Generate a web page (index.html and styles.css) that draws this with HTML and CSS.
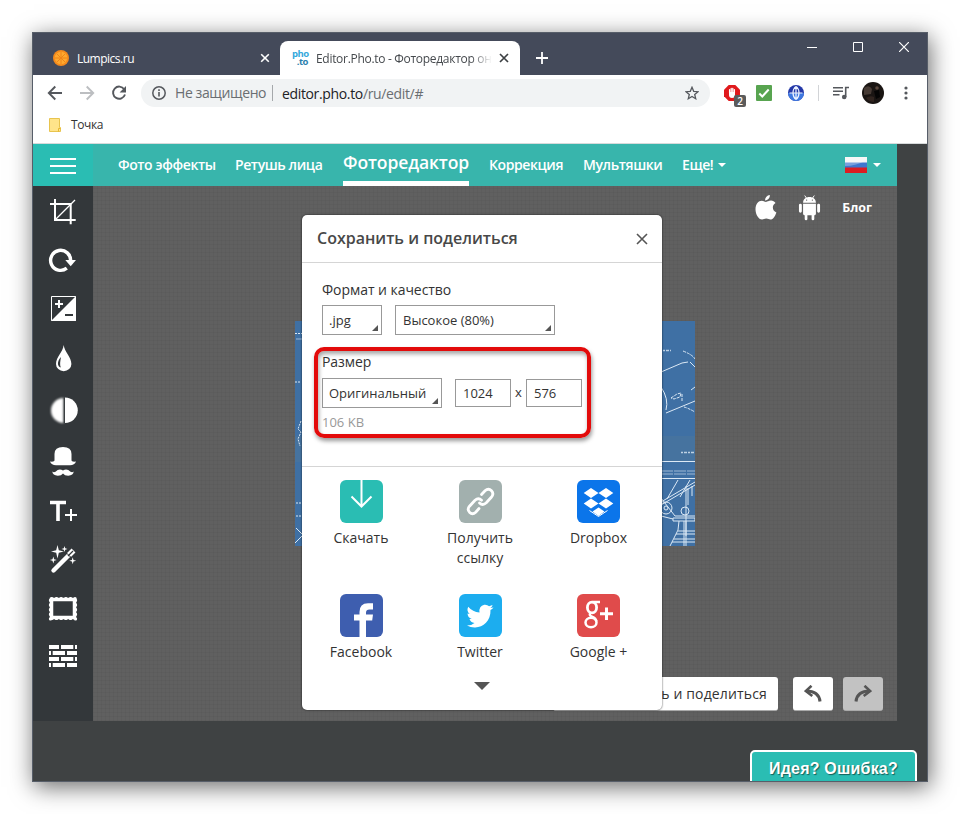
FILE: index.html
```html
<!DOCTYPE html>
<html lang="ru">
<head>
  <meta charset="UTF-8" />
  <meta name="viewport" content="width=device-width, initial-scale=1.0" />
  <title>Editor.Pho.to - Фоторедактор онлайн</title>
  <link rel="stylesheet" href="styles.css">
</head>
<body>
  <div class="window">
    <!-- вкладки -->
    <div class="titlebar">
      <div class="tab">
        <svg class="tab-icon" width="16" height="16" viewBox="0 0 16 16">
          <circle cx="8" cy="8" r="8" fill="#f58a1c"/><circle cx="8" cy="8" r="6.2" fill="#ffa92e"/>
          <path d="M8 2v12M2 8h12M3.8 3.8l8.4 8.4M12.2 3.8l-8.4 8.4" stroke="#f08418" stroke-width="1"/>
        </svg>
        <span class="tab-name">Lumpics.ru</span>
        <svg class="tab-close" width="10" height="10" viewBox="0 0 10 10"><path d="M1.2 1.2l7.6 7.6M8.8 1.2L1.2 8.8" stroke="#fff" stroke-width="1.6"/></svg>
      </div>
      <div class="tab active">
        <span class="photo-icon"><b>pho</b><b class="to">.to</b></span>
        <span class="tab-name fade">Editor.Pho.to - Фоторедактор он</span>
        <svg class="tab-close" width="10" height="10" viewBox="0 0 10 10"><path d="M1 1l8 8M9 1L1 9" stroke="#3c4043" stroke-width="1.7"/></svg>
      </div>
      <svg class="new-tab" width="12" height="12" viewBox="0 0 12 12"><path d="M6 0v12M0 6h12" stroke="#fff" stroke-width="1.8"/></svg>
      <div class="win-buttons">
        <svg width="10" height="10" viewBox="0 0 10 10"><path d="M0 5.5h10" stroke="#fff"/></svg>
        <svg width="10" height="10" viewBox="0 0 10 10"><path d="M.5 .5h9v9h-9z" fill="none" stroke="#fff"/></svg>
        <svg width="10" height="10" viewBox="0 0 10 10"><path d="M0 0l10 10M10 0L0 10" stroke="#fff" stroke-width="1.2"/></svg>
      </div>
    </div>

    <!-- адресная строка -->
    <div class="toolbar">
      <svg class="nav-btn" width="16" height="16" viewBox="0 0 16 16"><path d="M15 8H2M8.3 1.5L1.8 8l6.5 6.5" fill="none" stroke="#55585d" stroke-width="1.9"/></svg>
      <svg class="nav-btn" width="16" height="16" viewBox="0 0 16 16"><path d="M1 8h13M7.7 1.5L14.2 8l-6.5 6.5" fill="none" stroke="#bcbec1" stroke-width="1.9"/></svg>
      <svg class="nav-btn" width="16" height="16" viewBox="0 0 16 16"><path d="M13.2 4.2A6.1 6.1 0 1 0 14 9.5" fill="none" stroke="#55585d" stroke-width="1.9"/><path d="M15 1v6.4H8.6z" fill="#55585d"/></svg>
      <div class="omnibox">
        <svg width="14" height="14" viewBox="0 0 14 14"><circle cx="7" cy="7" r="6.2" fill="none" stroke="#55585d" stroke-width="1.5"/><path d="M7 6v4.5M7 3.2v1.7" stroke="#55585d" stroke-width="1.6"/></svg>
        <span class="insecure">Не защищено</span>
        <span class="url"><b>editor.pho.to</b>/ru/edit/#</span>
        <svg class="star" width="14" height="14" viewBox="0 0 14 14"><path d="M7 1.3l1.7 4 4.3.4-3.3 2.8 1 4.2L7 10.5l-3.7 2.2 1-4.2L1 5.7l4.3-.4z" fill="none" stroke="#55585d" stroke-width="1.3"/></svg>
      </div>
      <div class="extensions">
        <div class="blocker">
          <svg width="16" height="16" viewBox="0 0 16 16"><path d="M4.7 0h6.6L16 4.7v6.6L11.3 16H4.7L0 11.3V4.7z" fill="#e0191c"/><path d="M5.600 8V4.700M7.200 7V3.500M8.800 7V3.500M10.400 8V4.700" stroke="#fff" stroke-width="1.300" stroke-linecap="round"/><path d="M5 7h6v3a3 3 0 0 1-6 0z" fill="#fff"/></svg>
          <span class="count">2</span>
        </div>
        <svg width="16" height="16" viewBox="0 0 16 16"><rect width="16" height="16" rx="1" fill="#58a450"/><path d="M3.3 8.5l3 3 6.4-7" fill="none" stroke="#fff" stroke-width="2"/></svg>
        <svg width="16" height="16" viewBox="0 0 16 16"><circle cx="8" cy="8" r="8" fill="#2438a8"/><path d="M0 8a8 8 0 0 0 16 0z" fill="#3f78e0"/><path d="M8 1.500v13M1.500 8h13M8 1.500C4 4.500 4 11.500 8 14.500M8 1.500c4 3 4 10 0 13" fill="none" stroke="#eef4ff" stroke-width="1.2"/></svg>
        <i class="split"></i>
        <svg class="playlist" width="16" height="14" viewBox="0 0 16 14"><path d="M0 1.700h10M0 5.200h10M0 8.700h6.500" stroke="#55585d" stroke-width="1.5"/><path d="M12.700 11V1.500H16" fill="none" stroke="#55585d" stroke-width="1.600"/><circle cx="11.200" cy="11" r="2.300" fill="#55585d"/></svg>
        <svg class="avatar" width="22" height="22" viewBox="0 0 22 22"><circle cx="11" cy="11" r="11" fill="#1a1513"/><path d="M2 6q5-4 8 1l-1 5-7 1z" fill="#463a34"/><path d="M12 9l5-1 1 7-4 2z" fill="#050505"/><path d="M4 16q4-3 8-1v5q-5 0-8-4z" fill="#30241f"/><circle cx="15" cy="6" r="1.800" fill="#5a473d"/></svg>
        <svg class="dots" width="4" height="14" viewBox="0 0 4 14"><g fill="#55585d"><circle cx="2" cy="2" r="1.600"/><circle cx="2" cy="7" r="1.600"/><circle cx="2" cy="12" r="1.600"/></g></svg>
      </div>
    </div>

    <div class="bookmarks">
      <svg width="13" height="14" viewBox="0 0 13 14"><path d="M.5.5h10v9h1v4H.5z" fill="#ffe48a" stroke="#e8c44e"/><path d="M9.500 13.500v-3h2" fill="none" stroke="#e8b830"/></svg>
      <span>Точка</span>
    </div>

    <!-- страница редактора -->
    <div class="page">
      <header class="site-header">
        <div class="burger"><i></i><i></i><i></i></div>
        <nav class="menu">
          <a class="w-effects">Фото эффекты</a>
          <a class="w-retouch">Ретушь лица</a>
          <a class="current">Фоторедактор</a>
          <a class="w-fix">Коррекция</a>
          <a class="w-toon">Мультяшки</a>
          <a class="w-more">Еще!<i class="caret"></i></a>
        </nav>
        <div class="lang">
          <svg width="22" height="16" viewBox="0 0 22 16"><path fill="#f4f4f4" d="M0 0h22v6H0z"/><path fill="#3f77cf" d="M0 5.500h22V11H0z"/><path fill="#dc1d22" d="M0 10.500h22V16H0z"/><path d="M0 9Q11 9 22 3V0H0z" fill="#fff" opacity=".3"/></svg>
          <i class="caret"></i>
        </div>
      </header>

      <div class="editor">
        <aside class="tools">
          <svg width="60" height="50"><path d="M22 13v21h20.700M17 18h20.700v20.300" fill="none" stroke="#fff" stroke-width="2"/><path d="M22.500 33.500L42 14" stroke="#fff" stroke-width="1.200"/></svg>
          <svg width="60" height="50"><path d="M37.600 25A10 10 0 1 0 33.800 32.200" fill="none" stroke="#fff" stroke-width="3.400"/><path d="M32.300 24H43l-5.300 6.200z" fill="#fff"/></svg>
          <svg width="60" height="50"><path d="M18.500 10.500h24v24h-24z" fill="none" stroke="#fff"/><path d="M43 10v25H18z" fill="#fff"/><path d="M22 18h8M26 14v8" stroke="#fff" stroke-width="2"/><path d="M32 29h8" stroke="#33373a" stroke-width="2"/></svg>
          <svg width="60" height="50"><path d="M30.700 9C30 16 23 21 23 28a7.700 7.200 0 0 0 15.400 0C38.400 21 31.500 16 30.700 9z" fill="#fff"/><path d="M28 21c-4.500 5-3.500 9.500-.2 10.500-1.300-3-.5-6 .2-10.500z" fill="#33373a"/></svg>
          <svg width="60" height="50"><path class="soft" d="M30.500 12a12.500 12.500 0 0 0 0 25z" fill="#fff"/><path d="M32 11.500a12.600 12.600 0 0 1 0 25.500z" fill="#fff"/><path d="M31.300 12v25" stroke="#33373a"/></svg>
          <svg width="60" height="50"><path d="M21.500 24.500V18q0-7 8.500-7t8.500 7v6.500q0 1.500 4.500 1-1.500 3.800-6 3.800H23q-4.500 0-6-3.800 4.500.5 4.500-1z" fill="#fff"/><path d="M30 34.500q-4-2.500-7.500 1.300-1.700 1-3.200-.2.300 3.900 5.500 4.200 3.700 0 5.200-2.200 1.500 2.200 5.200 2.200 5.200-.3 5.500-4.200-1.500 1.200-3.200.2-3.500-3.800-7.500-1.300z" fill="#fff"/></svg>
          <svg width="60" height="50"><path d="M17 16.500h16M25 16v19" fill="none" stroke="#fff" stroke-width="3.600"/><path d="M32 29h12M38 23v12" stroke="#fff" stroke-width="2"/></svg>
          <svg width="60" height="50"><path d="M20.500 34.500l15-15" stroke="#fff" stroke-width="4.400" stroke-linecap="round"/><path d="M36 19l4.500-4.500" stroke="#fff" stroke-width="5.500"/><path d="M35 20l5-5" stroke="#33373a" stroke-width="1.200"/><path d="M34 17.500l3.500 3.500" stroke="#33373a"/><path d="M24.500 9l1.300 5.200 5.200 1.300-5.200 1.300-1.300 5.700-1.300-5.700L18 15.500l5.200-1.300zM31.500 10l.7 2.300 2.300.7-2.300.7-.7 2.300-.7-2.300-2.300-.7 2.300-.7zM20.300 20.500l.8 2.700 2.700.8-2.700.8-.8 2.700-.8-2.700-2.700-.8 2.700-.8zM39.700 21.200l.8 2.700 2.700.8-2.700.8-.8 2.700-.8-2.700-2.700-.8 2.700-.8z" fill="#fff"/></svg>
          <svg width="60" height="50"><path d="M18.500 13.500h23v18h-23z" fill="none" stroke="#fff" stroke-width="3.500"/><path d="M18.500 12.500h23.500M18.500 32.500h23.500M17.500 14v19M42.500 14v19" stroke="#fff" stroke-width="3.200" stroke-linecap="round" stroke-dasharray="0.500 4.200"/></svg>
          <svg width="60" height="50"><path d="M16 11h10m2 0h12.300m1.700 0h2M16 17h2m1.700 0H32m2 0h10M16 23h10m2 0h12.300m1.700 0h2M16 29h2m1.700 0H32m2 0h10" stroke="#fff" stroke-width="4"/></svg>
        </aside>

        <main class="canvas">
          <div class="apps">
            <svg width="22" height="26" viewBox="0 0 22 26"><path d="M14.800 0c.3 3-2.200 5.500-4.700 5.400C9.800 2.700 12 .400 14.800 0zM11 6.900c1.300 0 2.700-1.300 5-1.300 1.800 0 3.500.9 4.500 2.400-4 2.300-3.300 7.900.9 9.400-1.300 3.700-3.500 7.200-5.900 7.200-1.600 0-2.200-1-4.200-1s-2.700 1-4.200 1C3.500 24.600.5 19.200.5 14.300c0-5.300 3-8.600 6.300-8.600 1.800 0 3 1.200 4.200 1.200z" fill="#fff"/></svg>
            <svg width="23" height="27" viewBox="0 0 24 27"><path d="M5.300 8.500c0-3.800 3-6 6.700-6s6.700 2.200 6.700 6zM5.300 9.500h13.400v10.600q0 1.400-1.400 1.400H17v4q0 1.300-1.400 1.300T14.200 25.500v-4H9.800v4q0 1.300-1.400 1.300T7 25.500v-4h-.3q-1.400 0-1.400-1.400z" fill="#fff"/><path d="M2.500 11v6.500M21.500 11v6.500" stroke="#fff" stroke-width="3" stroke-linecap="round"/><path d="M7 1l2 3M17 1l-2 3" stroke="#fff"/><circle cx="9" cy="5.800" r=".7" fill="#5a5a5a"/><circle cx="15" cy="5.800" r=".7" fill="#5a5a5a"/></svg>
            <span>Блог</span>
          </div>

          <svg class="photo" width="400" height="225" viewBox="0 0 400 225">
            <rect width="400" height="225" fill="#3f70a4"/>
            <path fill="#49749e" d="M0 115h400v26H0z" opacity=".8"/>
            <g fill="none" stroke="#dce9f5" stroke-width="1">
              <path d="M1 18h6" opacity=".6"/>
              <path d="M0 12.500h7M0 61h5M1 182h5M1 195h6" stroke-dasharray="2 1"/>
              <path d="M366 140.500h34M366 157.500h34M0 222l7-7M1 207l6 6"/>
              <path d="M6 100l-3 8 3 3-3 7 2 7" stroke-dasharray="2 1"/>
              <path d="M366 51l21-9 6-1M366 66q8 12 5 23M371 92l29-12M395 41l5 5M396 69l4-3"/>
              <path d="M376 77l6-4 4-1-1 4-6 2zM388 30q10 4 12 8M387 73v7M389 86q4 1 11 5" stroke-dasharray="3 1"/>
              <path d="M366 150h34M366 153h34" opacity=".6" stroke-dasharray="12 1"/>
              <path d="M366 181l34-20M366 184l34-20M372 178l11-19M385 176l10-17M391 165v50M393 167v17M397 165v10"/>
              <circle cx="390" cy="190" r="4"/><circle cx="371" cy="187" r="6"/><circle cx="371" cy="187" r="2"/>
              <path d="M366 177l14 18h20M378 197h22v3h-22zM384 200l-1 9-8 16M391 200v25M389 200v25M383 210h17M381 213h19M379 218h21M377 221h23M366 195l12 3"/>
            </g>
            <path d="M368 29.500h8M386 131.500h13" stroke="#dce9f5" stroke-width="1.500" stroke-dasharray="2 1 3 1" opacity=".8"/>
          </svg>

          <div class="actions">
            <button class="save">Сохранить и поделиться</button>
            <button class="undo"><svg width="18" height="18" viewBox="0 0 18 18"><path d="M7.500.800L1.800 6l6.500 5" fill="none" stroke="#555" stroke-width="2.600"/><path d="M2 6q13 0 14 10.500" fill="none" stroke="#555" stroke-width="3"/></svg></button>
            <button class="undo off"><svg width="18" height="18" viewBox="0 0 18 18"><path d="M10.500.800L16.200 6l-6.500 5" fill="none" stroke="#555" stroke-width="2.600"/><path d="M16 6Q3 6 2 16.500" fill="none" stroke="#555" stroke-width="3"/></svg></button>
          </div>
        </main>
      </div>

      <a class="feedback">Идея? Ошибка?</a>
    </div>

    <!-- диалог сохранения -->
    <div class="modal">
      <div class="modal-head">
        <h2>Сохранить и поделиться</h2>
        <svg width="12" height="12" viewBox="0 0 12 12"><path d="M1 1l10 10M11 1L1 11" stroke="#555" stroke-width="1.600"/></svg>
      </div>
      <div class="modal-form">
        <div class="label">Формат и качество</div>
        <div class="row">
          <div class="select format">.jpg</div>
          <div class="select quality">Высокое (80%)</div>
        </div>
        <div class="label size-label">Размер</div>
        <div class="row">
          <div class="select size">Оригинальный</div>
          <div class="field">1024</div>
          <span class="times">x</span>
          <div class="field">576</div>
        </div>
        <div class="weight">106 KB</div>
        <div class="highlight"></div>
      </div>
      <div class="share">
        <div class="share-item">
          <svg width="43" height="43" viewBox="0 0 43 43"><rect width="43" height="43" rx="6" fill="#2abdb3"/><path d="M21.500 0v26M11.500 16.500l10 10 10-10" fill="none" stroke="#fff" stroke-width="2"/></svg>
          <span>Скачать</span>
        </div>
        <div class="share-item">
          <svg width="43" height="43" viewBox="0 0 43 43"><rect width="43" height="43" rx="6" fill="#a2b0ae"/><g fill="none" stroke="#fff" stroke-width="2.800" stroke-linecap="round"><path d="M22.500 14.500l3.500-3.700q3.500-3.200 6.500 0 2.800 3-.2 6.500l-5 5.500q-3.500 3.200-6.800.2"/><path d="M20 28.500l-3.300 3.700q-3.200 3-6 .3-3-3-.2-6.300l5.500-6q3.500-3 6.500 0"/></g></svg>
          <span>Получить<br>ссылку</span>
        </div>
        <div class="share-item">
          <svg width="43" height="43" viewBox="0 0 43 43"><rect width="43" height="43" rx="6" fill="#0b75ea"/><path d="M14 8l7.500 5-7.500 5-7.300-5zM29 8l7.300 5-7.300 5-7.500-5zM14 18.500l7.500 5-7.500 5-7.300-5zM29 18.500l7.300 5-7.300 5-7.500-5zM21.500 27.500l6 4-6 4.500-6-4.500z" fill="#fff"/><path d="M12.500 30.500l9 6 9-6" fill="none" stroke="#fff"/></svg>
          <span>Dropbox</span>
        </div>
        <div class="share-item">
          <svg width="43" height="43" viewBox="0 0 43 43"><rect width="43" height="43" rx="6" fill="#3e5eaf"/><path d="M19.500 43V26.500H14v-6h5.500V18q0-8.800 8.500-8.800h5v6.300h-3.500q-3.500 0-3.500 3.200v1.800h7l-.8 6H26V43z" fill="#fff"/></svg>
          <span>Facebook</span>
        </div>
        <div class="share-item">
          <svg width="43" height="43" viewBox="0 0 43 43"><rect width="43" height="43" rx="6" fill="#1cadef"/><path d="M34.500 13.500q-1.300 1.600-3 2.600C32 27 23.500 34 15.500 33.500q-4 0-7.500-2 4.500 0 7.500-2.500-4-.5-5-4h2.200q-4-1.500-4.200-5.500l2.200.6q-3.500-3-1.500-7.400 4.500 5.300 11.300 5.700-.8-6.500 4.800-7.700 3-.3 4.800 1.600l3.500-1.300q-.5 1.800-2.200 3z" fill="#fff"/></svg>
          <span>Twitter</span>
        </div>
        <div class="share-item">
          <svg width="43" height="43" viewBox="0 0 43 43"><rect width="43" height="43" rx="6" fill="#e04b4b"/><ellipse cx="15" cy="13.500" rx="4.600" ry="5.400" fill="none" stroke="#fff" stroke-width="2.800"/><ellipse cx="14" cy="28.500" rx="5.500" ry="4.800" fill="none" stroke="#fff" stroke-width="2.500"/><path d="M15.500 8h7.500M14 18.500q-3 2.500 1 4 4 1.500 4.500 5" fill="none" stroke="#fff" stroke-width="2.400"/><path d="M23 19.700h13M29.500 13.500v12.500" stroke="#fff" stroke-width="3"/></svg>
          <span>Google +</span>
        </div>
      </div>
      <i class="more"></i>
    </div>
  </div>
</body>
</html>
```
FILE: styles.css
```css
* {
  box-sizing: border-box;
  margin: 0;
  padding: 0;
}
body {
  width: 960px;
  height: 814px;
  padding: 32px;
  overflow: hidden;
  background: #fff;
  font-family: "Open Sans", "Noto Sans", sans-serif;
  color: #333;
}
svg {
  display: block;
  flex: none;
}
.window {
  position: relative;
  width: 896px;
  height: 750px;
  border: 1px solid #575e69;
  background: #fff;
  display: flex;
  flex-direction: column;
  box-shadow: 2px 5px 22px rgba(0, 0, 0, 0.58);
}

/* вкладки */
.titlebar {
  height: 42px;
  flex: none;
  display: flex;
  background: #444a5a;
}
.tab {
  width: 247px;
  height: 34px;
  margin-top: 8px;
  padding: 0 10px 0 20px;
  display: flex;
  align-items: center;
  color: #fff;
  font-size: 12px;
}
.tab-name {
  flex: 1;
  min-width: 0;
  margin-left: 8px;
  white-space: nowrap;
  letter-spacing: -0.5px;
}
.tab.active {
  width: 240px;
  padding: 0 11px 0 12px;
  background: #fff;
  color: #45494d;
  border-radius: 8px 8px 0 0;
}
.fade {
  margin-right: 7px;
  letter-spacing: -0.3px;
  -webkit-mask-image: linear-gradient(90deg, #000 88%, transparent);
  mask-image: linear-gradient(90deg, #000 88%, transparent);
}
.photo-icon {
  width: 16px;
  display: flex;
  flex-direction: column;
  font-size: 9.5px;
  line-height: 8px;
  letter-spacing: -0.5px;
  color: #35a9dc;
}
.photo-icon .to {
  color: #2c7fae;
  text-align: right;
}
.new-tab {
  margin: 19px 0 0 16px;
}
.win-buttons {
  margin: 9px 18px 0 auto;
  display: flex;
  gap: 36px;
}

/* панель браузера */
.toolbar {
  height: 36px;
  flex: none;
  padding-left: 14px;
  display: flex;
  align-items: center;
}
.nav-btn {
  margin-right: 16px;
}
.omnibox {
  flex: none;
  width: 569px;
  height: 28px;
  margin-left: -2px;
  padding: 0 11px;
  display: flex;
  align-items: center;
  border-radius: 14px;
  background: #f1f3f4;
  font-size: 14px;
  color: #6a6e72;
}
.insecure {
  width: 98px;
  margin-left: 9px;
  line-height: 16px;
  border-right: 1px solid #a5a8ab;
  letter-spacing: -0.4px;
  white-space: nowrap;
}
.url {
  margin-left: 9px;
  letter-spacing: -0.35px;
}
.url b {
  font-weight: 400;
  color: #202124;
}
.star {
  margin-left: auto;
}
.extensions {
  flex: 1;
  padding-left: 14px;
  display: flex;
  align-items: center;
}
.extensions > * {
  margin-right: 16px;
}
.extensions > .split {
  width: 1px;
  height: 16px;
  margin: 0 14px 0 -2px;
  background: #d2d4d7;
}
.extensions > .playlist {
  margin-right: 13px;
}
.extensions > .avatar {
  margin-right: 20px;
}
.extensions > .dots {
  margin-right: 0;
}
.blocker {
  position: relative;
}
.count {
  position: absolute;
  left: 10px;
  top: 10px;
  width: 12px;
  height: 12px;
  border-radius: 2px;
  background: #5b5b5b;
  color: #fff;
  font-size: 10px;
  font-weight: 600;
  line-height: 12px;
  text-align: center;
}
.bookmarks {
  height: 33px;
  flex: none;
  padding: 0 0 5px 16px;
  display: flex;
  align-items: center;
  gap: 9px;
  border-bottom: 1px solid #d7dadb;
  font-size: 12px;
  letter-spacing: -0.4px;
}

/* страница */
.page {
  flex: 1;
  min-height: 0;
  position: relative;
  overflow: hidden;
  background: #3f4243;
}
.site-header {
  width: 864px;
  height: 42px;
  display: flex;
  background: #38b5ac;
}
.burger {
  width: 60px;
  padding-top: 2px;
  display: flex;
  flex-direction: column;
  align-items: center;
  justify-content: center;
  gap: 5px;
  background: #2abdb3;
}
.burger i {
  width: 26px;
  height: 2px;
  background: #fff;
}
.menu {
  margin-left: 25px;
  display: flex;
  gap: 20px;
  color: #fff;
  font-size: 14px;
  font-weight: 600;
  line-height: 42px;
  letter-spacing: -0.4px;
  white-space: nowrap;
}
.w-effects { width: 97px; }
.w-retouch { width: 88px; }
.w-fix { width: 74px; }
.w-toon { width: 79px; }
.menu .current {
  width: 126px;
  border-bottom: 5px solid #fff;
  font-size: 17.5px;
  line-height: 37px;
  letter-spacing: -0.1px;
}
.caret {
  display: inline-block;
  border: 4px solid transparent;
  border-top-color: #fff;
  border-bottom: 0;
}
.w-more .caret {
  margin-left: 5px;
  vertical-align: 3px;
}
.lang {
  margin-left: auto;
  padding-right: 16px;
  display: flex;
  align-items: center;
  gap: 6px;
}
.editor {
  width: 864px;
  height: 535px;
  display: flex;
}
.tools {
  width: 60px;
  background: #33373a;
}
.soft {
  filter: blur(1px);
}
.canvas {
  flex: 1;
  display: flex;
  flex-direction: column;
  background-color: #606060;
  background-image:
    repeating-linear-gradient(0deg, rgba(0, 0, 0, 0.03) 0 1px, transparent 1px 4px),
    repeating-linear-gradient(90deg, rgba(0, 0, 0, 0.03) 0 1px, transparent 1px 4px);
}
.apps {
  height: 43px;
  padding-right: 25px;
  display: flex;
  align-items: center;
  justify-content: flex-end;
  gap: 21px;
  color: #fff;
  font-size: 12.5px;
  font-weight: 700;
}
.photo {
  margin: 92px auto 0;
}
.actions {
  margin-top: auto;
  padding: 0 14px 10px 0;
  display: flex;
  justify-content: flex-end;
  gap: 10px;
}
.actions button {
  height: 34px;
  border: 1px solid #aaa;
  border-width: 0 0 1px;
  border-radius: 3px;
  background: #fff;
  color: #333;
  font-family: inherit;
  font-size: 14px;
}
.actions .save {
  width: 225px;
  margin-right: 5px;
  padding-right: 11px;
  text-align: right;
  font-weight: 500;
  letter-spacing: 0.15px;
}
.actions .undo {
  width: 40px;
  display: flex;
  align-items: center;
  justify-content: center;
}
.actions .off {
  background: #c2c2c2;
}
.feedback {
  position: absolute;
  right: 10px;
  bottom: -4px;
  width: 167px;
  height: 35px;
  border: 2px solid #fff;
  border-radius: 5px 5px 0 0;
  background: #2abdb3;
  color: #fff;
  font: bold 16px/34px "Liberation Sans", Arial, sans-serif;
  letter-spacing: 0.2px;
  text-align: center;
  text-shadow: 1px 1px 1px rgba(0, 0, 0, 0.5);
}

/* диалог */
.modal {
  position: absolute;
  left: 269px;
  top: 182px;
  width: 360px;
  height: 495px;
  border-radius: 5px;
  background: #fff;
  box-shadow: 0 0 2px rgba(0, 0, 0, 0.8);
}
.modal-head {
  height: 48px;
  padding: 0 14px 0 15px;
  display: flex;
  align-items: center;
  justify-content: space-between;
  border-bottom: 1px solid #d5d5d5;
}
.modal-head h2 {
  padding-bottom: 2px;
  font-size: 16px;
  font-weight: 600;
  color: #484848;
}
.modal-form {
  position: relative;
  height: 204px;
  padding: 16px 20px 0;
  border-bottom: 1px solid #d5d5d5;
  font-size: 13px;
}
.label {
  height: 26px;
  line-height: 22px;
  font-size: 14px;
  letter-spacing: -0.05px;
}
.size-label {
  height: 27px;
  margin-top: 16px;
}
.row {
  display: flex;
  align-items: center;
}
.select,
.field {
  height: 30px;
  padding-left: 7px;
  border: 1px solid #999;
  line-height: 29px;
  white-space: nowrap;
}
.select {
  position: relative;
  padding-left: 6px;
}
.select::after {
  content: '';
  position: absolute;
  right: 3px;
  bottom: 3px;
  border-left: 6px solid transparent;
  border-bottom: 6px solid #555;
}
.format { width: 60px; margin-right: 13px; }
.quality { width: 160px; padding-left: 7px; }
.size { width: 120px; margin-right: 13px; }
.field {
  width: 56px;
  height: 28px;
  line-height: 27px;
}
.times {
  width: 15px;
  padding-bottom: 2px;
  text-align: center;
}
.weight {
  margin-top: 5px;
  color: #999;
}
.highlight {
  position: absolute;
  left: 12px;
  top: 84px;
  width: 277px;
  height: 91px;
  border: 4px solid #e30b0b;
  border-radius: 10px;
  box-shadow: 1px 3px 4px rgba(0, 0, 0, 0.4), inset 1px 3px 4px rgba(0, 0, 0, 0.35);
}
.share {
  padding-top: 13px;
  display: grid;
  grid-template-columns: 118px 120px 117px;
  grid-auto-rows: 114px;
}
.share-item {
  display: flex;
  flex-direction: column;
  align-items: center;
  gap: 5px;
  font-size: 14px;
  line-height: 20px;
  text-align: center;
}
.more {
  display: block;
  width: 16px;
  margin: -26px auto 0;
  border: 8px solid transparent;
  border-top-color: #555;
  border-bottom: 0;
}
```
